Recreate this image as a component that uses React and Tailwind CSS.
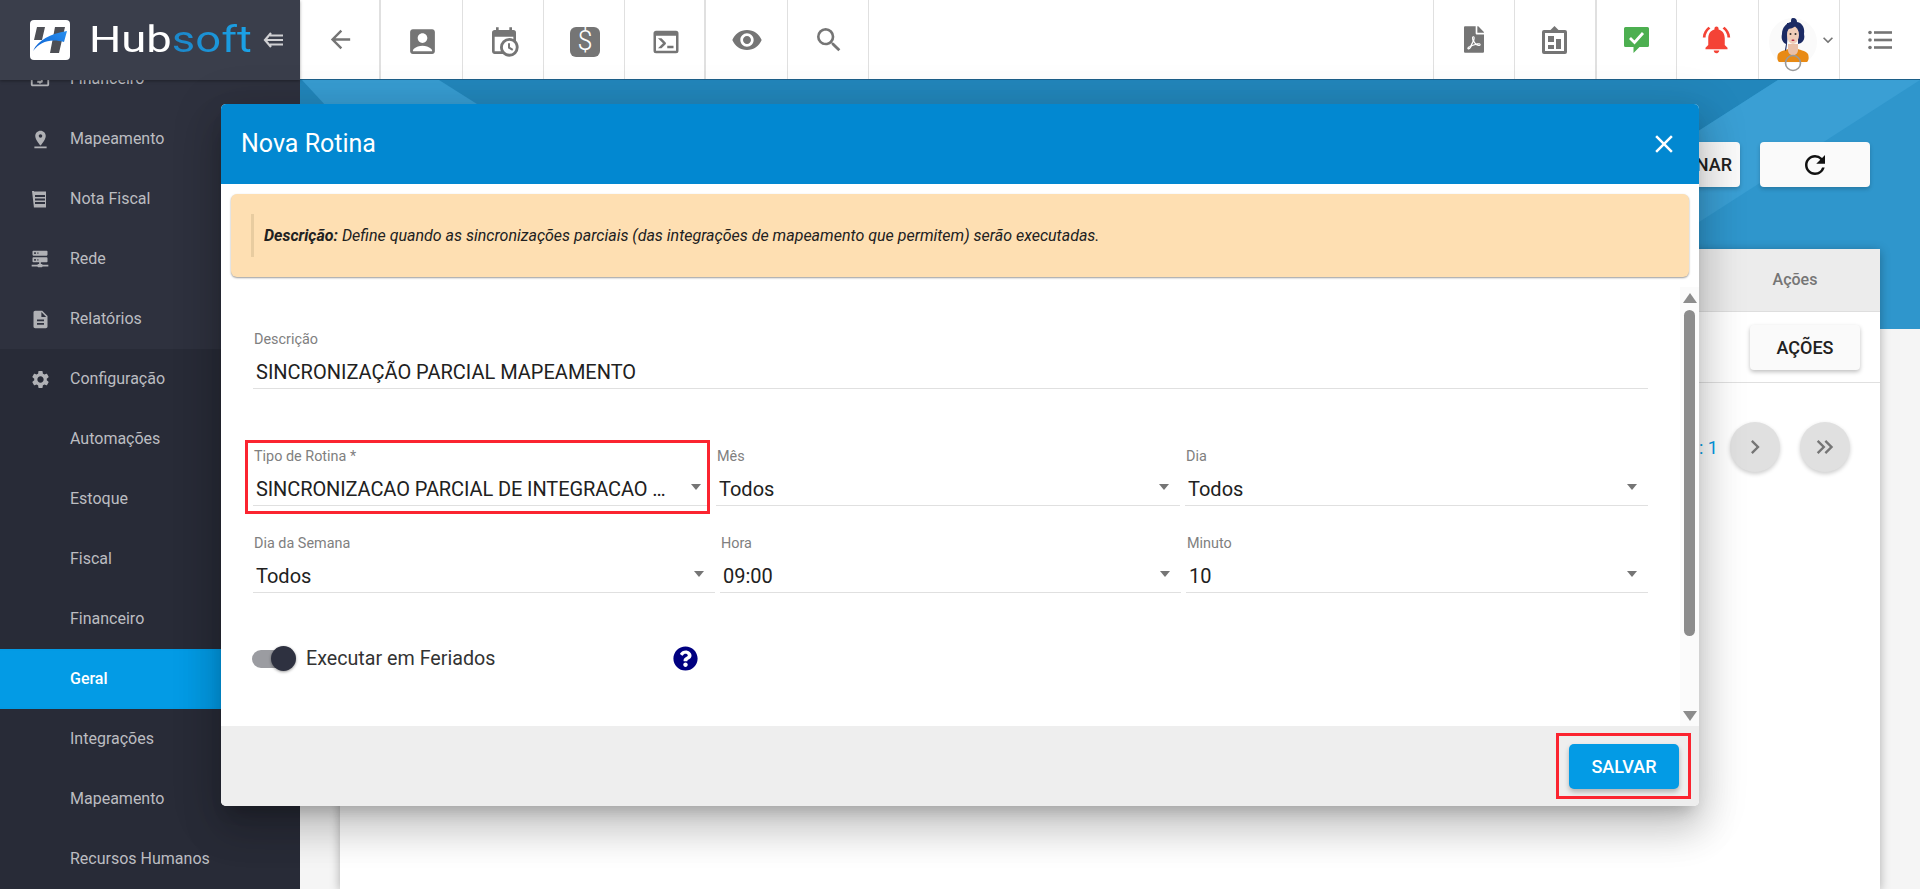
import {
  MdArrowBack,
  MdAccountBox,
  MdVisibility,
  MdSearch,
  MdNotificationsActive,
  MdKeyboardArrowDown,
  MdClose,
  MdRefresh,
  MdPinDrop,
  MdDescription,
  MdSettings,
  MdChevronRight,
  MdKeyboardDoubleArrowRight,
  MdLocalAtm,
} from "react-icons/md";
import { FaFilePdf, FaQuestionCircle } from "react-icons/fa";

const MdiIcon = ({ d, className }) => (
  <svg viewBox="0 0 24 24" fill="currentColor" className={className}>
    <path d={d} />
  </svg>
);

const calendarClock =
  "M15,13H16.5V15.82L18.94,17.23L18.19,18.53L15,16.69V13M19,8H5V19H9.67C9.24,18.09 9,17.07 9,16A7,7 0 0,1 16,9C17.07,9 18.09,9.24 19,9.67V8M5,21C3.89,21 3,20.1 3,19V5C3,3.89 3.89,3 5,3H6V1H8V3H16V1H18V3H19A2,2 0 0,1 21,5V11.1C22.24,12.36 23,14.09 23,16A7,7 0 0,1 16,23C14.09,23 12.36,22.24 11.1,21H5M16,11.15A4.85,4.85 0 0,0 11.15,16C11.15,18.68 13.32,20.85 16,20.85A4.85,4.85 0 0,0 20.85,16C20.85,13.32 18.68,11.15 16,11.15Z";
const consoleIcon =
  "M20,19V7H4V19H20M20,3A2,2 0 0,1 22,5V19A2,2 0 0,1 20,21H4A2,2 0 0,1 2,19V5C2,3.89 2.9,3 4,3H20M13,17V15H18V17H13M9.58,13L5.57,9H8.4L11.7,12.3C12.09,12.69 12.09,13.33 11.7,13.72L8.42,17H5.59L9.58,13Z";
const serverNetwork =
  "M13,18H14A1,1 0 0,1 15,19H22V21H15A1,1 0 0,1 14,22H10A1,1 0 0,1 9,21H2V19H9A1,1 0 0,1 10,18H11V16H4A1,1 0 0,1 3,15V11A1,1 0 0,1 4,10H20A1,1 0 0,1 21,11V15A1,1 0 0,1 20,16H13V18M4,2H20A1,1 0 0,1 21,3V7A1,1 0 0,1 20,8H4A1,1 0 0,1 3,7V3A1,1 0 0,1 4,2M9,6H10V4H9V6M9,14H10V12H9V14M5,4V6H7V4H5M5,12V14H7V12H5Z";

const NotaIcon = () => (
  <svg viewBox="0 0 16 17" fill="currentColor" className="w-[16px] h-[17px]">
    <path
      fillRule="evenodd"
      d="M0 0h2l1 1 1-1 1 1 1-1 1 1 1-1 1 1 1-1 1 1 1-1 1 1 1-1v17l-1-1-1 1-1-1-1 1-1-1-1 1-1-1-1 1-1-1-1 1-1-1-1 1zM3 4v2h10V4zM3 7.500v2h10v-2zM3 11v2h10v-2z"
    />
  </svg>
);

const BoardIcon = () => (
  <svg viewBox="0 0 25 28" fill="#757575" className="w-[25px] h-[28px]">
    <path d="M12.500 0l5 5h-10z" />
    <path
      fillRule="evenodd"
      d="M2 4h21a2 2 0 0 1 2 2v20a2 2 0 0 1-2 2H2a2 2 0 0 1-2-2V6a2 2 0 0 1 2-2zM3 7v18h19V7z"
    />
    <rect x="6" y="10" width="6" height="6" />
    <rect x="6" y="19" width="6" height="4" />
    <rect x="14" y="13" width="5" height="10" />
  </svg>
);

const ChatCheck = () => (
  <svg viewBox="0 0 25 26" className="w-[25px] h-[26px]">
    <path
      fill="#4caf50"
      d="M1.500 0h22a1.500 1.500 0 0 1 1.500 1.500v17a1.500 1.500 0 0 1-1.500 1.500h-8l-6 6v-6h-8a1.500 1.500 0 0 1-1.500-1.500v-17a1.500 1.500 0 0 1 1.500-1.500z"
    />
    <path
      d="M6 11l4.500 4.500 8.500-9.500"
      fill="none"
      stroke="#fff"
      strokeWidth="2.800"
    />
  </svg>
);

const ListDots = () => (
  <svg viewBox="0 0 24 20" fill="#757575" className="w-[24px] h-[20px]">
    <circle cx="2" cy="2.500" r="1.800" />
    <circle cx="2" cy="10" r="1.800" />
    <circle cx="2" cy="17.500" r="1.800" />
    <rect x="6" y="1.200" width="18" height="2.600" />
    <rect x="6" y="8.700" width="18" height="2.600" />
    <rect x="6" y="16.200" width="18" height="2.600" />
  </svg>
);

const Avatar = () => (
  <svg viewBox="0 0 50 56" className="w-[50px] h-[56px] shrink-0">
    <circle cx="25" cy="25" r="24" fill="#fafafa" />
    <path
      d="M10 37c2-3 8-4 10-5h10c2 1 8 2 10 5 1 3 1 6-1 8H11c-2-2-2-5-1-8z"
      fill="#e88a14"
    />
    <path d="M20 27h10v6c0 3-2 5-5 5s-5-2-5-5z" fill="#eac0a8" />
    <path
      d="M25 1c3 0 4 2 4 4 6 1 8 7 7 12 1 4 0 7-3 9l-3 1V13H20l-1 14-1 7-1-1 1-6c-4-2-5-6-4-10 0-6 4-11 9-12 0-2 0-4 2-4z"
      fill="#1b2a63"
    />
    <ellipse cx="25" cy="18" rx="6" ry="9" fill="#f0cdb9" />
    <path d="M19 12c3 0 7-1 9-4 2 1 3 3 3 6l1-8H19z" fill="#1b2a63" />
    <circle cx="22.500" cy="17" r="1" fill="#33302f" />
    <circle cx="27.500" cy="17" r="1" fill="#33302f" />
    <rect x="23.500" y="22.500" width="3" height="1.400" rx="0.700" fill="#b5314a" />
    <path d="M18 46h14a7.500 7.500 0 0 1-14 0z" fill="#fff" />
    <circle cx="25" cy="46" r="7.500" fill="none" stroke="#999" strokeWidth="1.600" />
  </svg>
);

const Banner = () => (
  <svg
    viewBox="0 0 1620 249"
    preserveAspectRatio="none"
    className="absolute left-0 top-0 w-full h-[249px]"
  >
    <rect width="1620" height="249" fill="#2286bb" />
    <path d="M1478 0L1200 178V249H1620V0z" fill="#2f96cc" />
    <path d="M1478 0H1620L1200 270V178z" fill="#3a9fd4" />
    <path d="M2 0H139L177 24V40H39z" fill="#379cd1" />
  </svg>
);

const menu = [
  { label: "Financeiro", icon: <MdLocalAtm size={22} />, light: true },
  { label: "Mapeamento", icon: <MdPinDrop size={21} />, light: true },
  { label: "Nota Fiscal", icon: <NotaIcon />, light: true },
  { label: "Rede", icon: <MdiIcon d={serverNetwork} className="w-[20px] h-[20px]" />, light: true },
  { label: "Relatórios", icon: <MdDescription size={21} />, light: true },
  { label: "Configuração", icon: <MdSettings size={21} /> },
  { label: "Automações" },
  { label: "Estoque" },
  { label: "Fiscal" },
  { label: "Financeiro" },
  { label: "Geral", active: true },
  { label: "Integrações" },
  { label: "Mapeamento" },
  { label: "Recursos Humanos" },
];

const SideItem = ({ item }) => (
  <div
    className={`flex items-center h-[60px] shrink-0 text-[16px] ${
      item.active
        ? "bg-[#039be5] text-white font-medium shadow-[inset_-18px_0_14px_-14px_rgba(0,60,100,0.55)]"
        : item.light
          ? "bg-[#2e313e] text-[#bcbdc1]"
          : "text-[#bcbdc1]"
    }`}
  >
    <span className="w-[70px] pl-[28px] flex items-center text-[#b0b1b5]">
      <span className="w-[24px] flex justify-center">{item.icon}</span>
    </span>
    {item.label}
  </div>
);

const TopButton = ({ children, left, thick, pt }) => (
  <div
    className={`w-[81.25px] h-full flex items-center justify-center border-[#e0e0e0] ${
      left ? (thick ? "border-l-2" : "border-l") : `pl-[2px] ${thick ? "border-r-2" : "border-r"}`
    } ${pt ? "pt-[4px]" : ""}`}
  >
    {children}
  </div>
);

const Field = ({ label, value, select, arrowClass, valueClass }) => (
  <div className="relative min-w-0">
    <div className="h-[20px] flex items-center pl-[1px] text-[14.4px] text-[#808080]">
      {label}
    </div>
    <div
      className={`mt-[5px] h-[34px] flex items-center pl-[3px] border-b border-[#e0e0e0] text-[20px] text-[#212121] whitespace-nowrap ${
        valueClass || ""
      }`}
    >
      {value}
    </div>
    {select && (
      <span
        className={`absolute top-[37px] w-0 h-0 border-x-[5px] border-x-transparent border-t-[6px] border-t-[#757575] ${
          arrowClass || "right-[11px]"
        }`}
      />
    )}
  </div>
);

const Form = () => (
  <div className="pt-[53px] pl-[32px] pr-[51px]">
    <Field label="Descrição" value="SINCRONIZAÇÃO PARCIAL MAPEAMENTO" />
    <div className="mt-[58px] grid grid-cols-[463px_469px_463px]">
      <div className="pr-[8px]">
        <Field
          select
          label="Tipo de Rotina *"
          value="SINCRONIZACAO PARCIAL DE INTEGRACAO …"
          arrowClass="right-[7px]"
          valueClass="tracking-[-0.1px]"
        />
      </div>
      <div className="pr-[5px]">
        <Field select label="Mês" value="Todos" />
      </div>
      <Field select label="Dia" value="Todos" />
    </div>
    <div className="mt-[28px] grid grid-cols-[462px_461px_462px] gap-x-[5px]">
      <Field select label="Dia da Semana" value="Todos" />
      <Field select label="Hora" value="09:00" />
      <Field select label="Minuto" value="10" />
    </div>
    <div className="mt-[53px] flex items-center h-[25px] -ml-[1px]">
      <div className="relative w-[44px] h-[25px]">
        <div className="absolute left-0 right-[8px] top-[4px] h-[18px] rounded-full bg-[#9b9ca1]" />
        <div className="absolute right-0 top-0 w-[25px] h-[25px] rounded-full bg-[#2e3140] shadow-[0_1px_3px_rgba(0,0,0,0.4)]" />
      </div>
      <span className="ml-[10px] w-[190px] text-[19.7px] text-[#333333] whitespace-nowrap">Executar em Feriados</span>
      <FaQuestionCircle className="ml-[177px] w-[25px] h-[25px] text-[#000080]" />
    </div>
  </div>
);

const Modal = () => (
  <div className="absolute z-30 left-[221px] top-[104px] w-[1478px] h-[702px] flex flex-col bg-white rounded-[5px] shadow-[0_11px_15px_-7px_rgba(0,0,0,0.2),0_24px_38px_3px_rgba(0,0,0,0.14),0_9px_46px_8px_rgba(0,0,0,0.12)]">
    <div className="h-[80px] shrink-0 flex items-center justify-between bg-[#0288d1] rounded-t-[5px] pl-[20px] pr-[20px] text-white">
      <span className="text-[25px]">Nova Rotina</span>
      <MdClose size={30} />
    </div>
    <div className="mx-[10px] mt-[10px] h-[83px] shrink-0 flex items-center rounded-[6px] bg-[#fedfb2] pl-[20px] shadow-[0_1px_2px_rgba(0,0,0,0.4)]">
      <div className="h-[43px] border-l-[3px] border-[#e8cca0] pl-[10px] flex items-center text-[16px] italic text-[#212121]">
        <b className="mr-[4px]">Descrição:</b>
        Define quando as sincronizações parciais (das integrações de mapeamento que permitem) serão executadas.
      </div>
    </div>
    <div className="relative flex-1 min-h-0">
      <Form />
      <div className="absolute right-0 top-[10px] bottom-0 w-[19px] bg-[#fbfbfb]">
        <span className="absolute left-[2.500px] top-[6px] w-0 h-0 border-x-[7px] border-x-transparent border-b-[10px] border-b-[#8c8c8c]" />
        <div className="absolute left-[4px] top-[23px] w-[11px] h-[326px] rounded-full bg-[#8c8c8c]" />
        <span className="absolute left-[2.500px] bottom-[5px] w-0 h-0 border-x-[7px] border-x-transparent border-t-[10px] border-t-[#8c8c8c]" />
      </div>
    </div>
    <div className="h-[80px] shrink-0 flex items-center justify-end bg-[#eeeeee] rounded-b-[5px] pr-[20px]">
      <button className="w-[110px] h-[45px] rounded-[5px] bg-[#039be5] text-white text-[18px] font-medium shadow-[0_3px_5px_rgba(0,0,0,0.25)]">
        SALVAR
      </button>
    </div>
    <div className="absolute left-[24px] top-[336px] w-[465px] h-[74px] border-[3px] border-[#fb2430]" />
    <div className="absolute left-[1335px] top-[629px] w-[135px] h-[66px] border-[3px] border-[#fb2430]" />
  </div>
);

const App = () => {
  return (
    <div className="relative flex h-screen w-full overflow-hidden bg-[#f5f5f5] font-[Roboto,sans-serif]">
      <aside className="relative z-20 w-[300px] shrink-0 flex flex-col bg-[#282b37]">
        <div className="relative z-10 h-[80px] shrink-0 flex items-center bg-[#3a3e4b] pl-[30px] shadow-[0_1px_3px_rgba(0,0,0,0.35)]">
          <svg viewBox="0 0 40 40" className="w-[40px] h-[40px] shrink-0">
            <defs>
              <linearGradient id="swoosh" x1="0" y1="1" x2="1" y2="0">
                <stop offset="0" stopColor="#0a5fd0" />
                <stop offset="1" stopColor="#2a90ef" />
              </linearGradient>
            </defs>
            <rect width="40" height="40" rx="4" fill="#fff" />
            <path d="M7 7h8l-3 13H4zM25 7h10l-6 26h-9z" fill="#4d4f55" />
            <path d="M3 31C8 20 20 14 37 11l-3 11C20 18 10 22 3 31z" fill="url(#swoosh)" />
          </svg>
          <span className="ml-[19px] inline-block w-[165px] text-[36px] leading-none text-white whitespace-nowrap origin-left scale-x-[1.26]">
            Hub
            <span className="bg-gradient-to-r from-[#1c86c8] to-[#1aa3e8] bg-clip-text text-transparent">soft</span>
          </span>
          <svg viewBox="0 0 20 16" className="ml-[9px] w-[20px] h-[16px] shrink-0" fill="none" stroke="#d0d0d3" strokeWidth="2.200">
            <path d="M8 1L2 8l6 7M3 8h17M7 3.500h13M7 12.500h13" />
          </svg>
        </div>
        <nav className="-mt-[31px] flex flex-col">
          {menu.map((item, i) => (
            <SideItem key={i} item={item} />
          ))}
        </nav>
      </aside>

      <div className="flex-1 min-w-0 flex flex-col">
        <header className="relative z-10 h-[80px] shrink-0 flex justify-between bg-white border-b border-[#1c5f88] text-[#757575]">
          <div className="flex">
            <TopButton thick><MdArrowBack size={29} /></TopButton>
            <TopButton pt><MdAccountBox size={33} /></TopButton>
            <TopButton pt><MdiIcon d={calendarClock} className="w-[32px] h-[32px]" /></TopButton>
            <TopButton pt>
              <div className="w-[30px] h-[30px] rounded-[6px] bg-[#757575] text-white text-[27px] font-light flex items-center justify-center">$</div>
            </TopButton>
            <TopButton pt thick><MdiIcon d={consoleIcon} className="w-[30px] h-[30px]" /></TopButton>
            <TopButton><MdVisibility size={32} /></TopButton>
            <TopButton><MdSearch size={32} /></TopButton>
          </div>
          <div className="flex">
            <TopButton left><FaFilePdf className="w-[20px] h-[27px]" /></TopButton>
            <TopButton left><BoardIcon /></TopButton>
            <TopButton left thick><ChatCheck /></TopButton>
            <TopButton left><MdNotificationsActive size={33} className="text-[#f44336] -ml-[2px]" /></TopButton>
            <TopButton left>
              <div className="flex items-center pt-[10px] ml-[7px]">
                <Avatar />
                <MdKeyboardArrowDown size={20} className="-mt-[10px] -mr-[2px]" />
              </div>
            </TopButton>
            <TopButton left><ListDots /></TopButton>
          </div>
        </header>

        <main className="relative flex-1 min-h-0 flex flex-col">
          <Banner />
          <div className="relative flex justify-end gap-[20px] pt-[62px] pr-[50px]">
            <button className="w-[120px] h-[45px] rounded-[4px] bg-[#fafafa] text-[18px] font-medium text-[#212121] text-right pr-[8px] shadow-[0_2px_4px_rgba(0,0,0,0.2)]">
              SELECIONAR
            </button>
            <button className="w-[110px] h-[45px] rounded-[4px] bg-[#fafafa] flex items-center justify-center text-[#111] shadow-[0_2px_4px_rgba(0,0,0,0.2)]">
              <MdRefresh size={30} />
            </button>
          </div>
          <section className="relative mt-[62px] mx-[40px] flex-1 bg-white shadow-[0_2px_10px_rgba(0,0,0,0.3)]">
            <div className="h-[63px] flex items-center justify-end bg-[#ececec] border-b border-[#dedede] text-[16px] font-medium text-[#757575]">
              <span className="w-[170px] text-center">Ações</span>
            </div>
            <div className="h-[71px] flex items-center justify-end pr-[20px] border-b border-[#e0e0e0]">
              <button className="w-[110px] h-[45px] rounded-[4px] bg-[#fafafa] text-[18px] font-medium text-[#212121] shadow-[0_2px_4px_rgba(0,0,0,0.25)]">
                AÇÕES
              </button>
            </div>
            <div className="flex items-center justify-end pt-[39px] pr-[30px] text-[#757575]">
              <span className="mr-[12px] text-[18px] text-[#039be5]">Página: 1</span>
              <div className="w-[50px] h-[50px] rounded-full bg-[#e0e0e0] flex items-center justify-center shadow-[0_2px_4px_rgba(0,0,0,0.2)]">
                <MdChevronRight size={28} />
              </div>
              <div className="ml-[20px] w-[50px] h-[50px] rounded-full bg-[#e0e0e0] flex items-center justify-center shadow-[0_2px_4px_rgba(0,0,0,0.2)]">
                <MdKeyboardDoubleArrowRight size={28} />
              </div>
            </div>
          </section>
        </main>
      </div>

      <Modal />
    </div>
  );
};

export default App;
